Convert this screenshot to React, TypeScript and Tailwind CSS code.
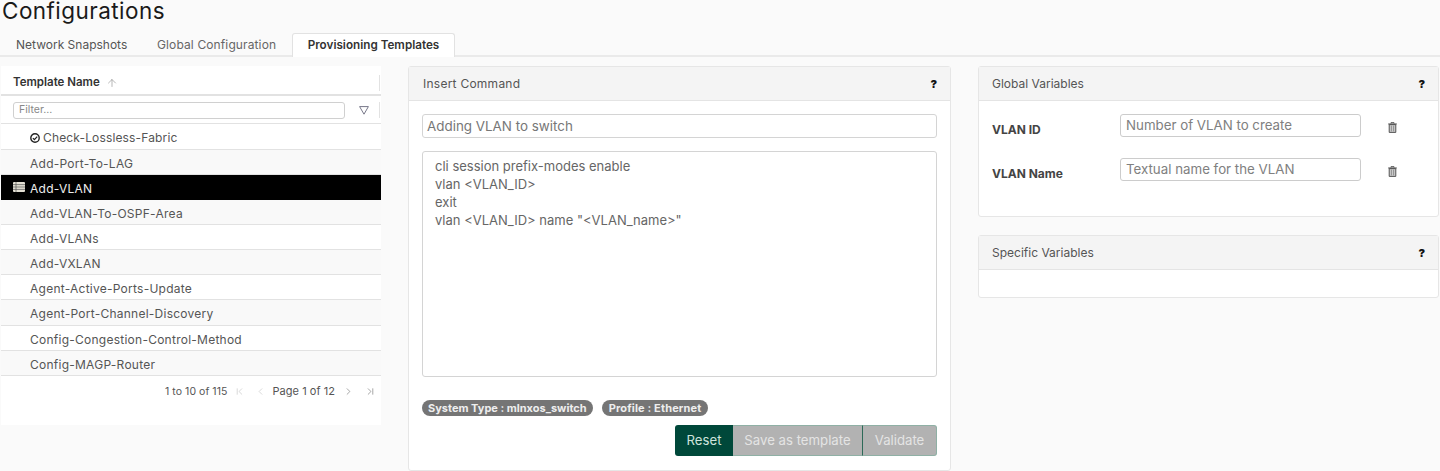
import React from "react";
import { ArrowUp, ChevronFirst, ChevronLast, ChevronLeft, ChevronRight } from "lucide-react";

const rows = [
  "Add-Port-To-LAG",
  "Add-VLAN",
  "Add-VLAN-To-OSPF-Area",
  "Add-VLANs",
  "Add-VXLAN",
  "Agent-Active-Ports-Update",
  "Agent-Port-Channel-Discovery",
  "Config-Congestion-Control-Method",
  "Config-MAGP-Router",
];

const TableIcon = () => (
  <svg width="12" height="10" viewBox="0 0 12 10" className="absolute left-[12px] top-[7px]">
    <rect width="12" height="10" rx="1" fill="#e4e0d4" />
    <path d="M0 2.6H12M0 5H12M0 7.4H12" stroke="#555" strokeWidth="0.7" />
    <path d="M3 0V10" stroke="#555" strokeWidth="0.7" />
  </svg>
);

const CheckIcon = () => (
  <svg width="10" height="10" viewBox="0 0 10 10" className="mr-[3px] shrink-0">
    <circle cx="5" cy="5" r="4.2" fill="none" stroke="#222" strokeWidth="1.4" />
    <path d="M2.9 5.1 4.4 6.6 7.2 3.6" fill="none" stroke="#222" strokeWidth="1.3" />
  </svg>
);

const FilterIcon = () => (
  <svg width="10" height="9" viewBox="0 0 10 9" className="ml-[14px]">
    <path d="M.6.6H9.4L5 8.2Z" fill="none" stroke="#778" strokeWidth="1" strokeLinejoin="round" />
  </svg>
);

const TrashIcon = () => (
  <svg width="9" height="11" viewBox="0 0 9 11" className="ml-[27px] mt-[8px]">
    <path d="M3 1.6V.6H6V1.6" fill="none" stroke="#555" strokeWidth="0.9" />
    <path d="M.2 2H8.8" stroke="#555" strokeWidth="1.1" />
    <path d="M1.2 2.6H7.8V10.4H1.2Z" fill="#ccc" stroke="#444" strokeWidth="0.9" />
    <path d="M3.4 3.6V9.4M5.6 3.6V9.4" stroke="#777" strokeWidth="0.7" />
  </svg>
);

const PanelHeader = ({ title, wide }: { title: string; wide?: boolean }) => (
  <div className="h-[34px] flex items-center justify-between pl-[13px] pr-[13px] bg-[#f4f4f4] border-b border-[#e4e4e4] text-[12px] text-[#555]">
    <span className={wide ? "pl-px tracking-[0.25px]" : ""}>{title}</span>
    <span className="pt-[2px] text-[11px] font-black text-[#111]">?</span>
  </div>
);

const Variable = ({ label, hint }: { label: string; hint: string }) => (
  <div className="flex items-start h-[44px]">
    <span className="w-[141px] pt-[7px] pl-[13px] text-[12px] font-bold text-[#444]">{label}</span>
    <div className="w-[241px] h-[23px] pt-px border border-[#ccc] rounded-[3px] flex items-center px-[5px] text-[13.3px] text-[#808080]">{hint}</div>
    <TrashIcon />
  </div>
);

export default function App() {
  return (
    <div className="w-[1440px] h-[471px] overflow-hidden bg-[#fafafa] font-['Inter',sans-serif] text-[#555]">
      <h1 className="h-[33px] pl-[2px] text-[22.5px] tracking-[0.45px] leading-[22px] text-[#1a1a1a]">Configurations</h1>

      {/* Tabs */}
      <div className="h-[24px] flex items-end border-b-2 border-[#eaeaea] text-[12px]">
        <div className="w-[157px] h-full pl-[16px] pt-[2px] flex items-center text-[#555]">Network Snapshots</div>
        <div className="w-[135px] h-full pt-[2px] flex items-center tracking-[0.12px] text-[#666]">Global Configuration</div>
        <div className="w-[163px] h-[24px] flex items-center justify-center bg-white border border-b-0 border-[#e2e2e2] rounded-t-[3px] -mb-[2px] text-[11.7px] font-semibold text-[#333]">
          Provisioning Templates
        </div>
      </div>

      <div className="flex mt-[9px]">
        {/* Template list */}
        <div className="w-[380px] ml-px h-[359px] bg-white shrink-0">
          <div className="h-[30px] flex items-center pl-[12px] pt-[6px] pr-[1px] border-b-2 border-[#e2e2e2] text-[11.5px] font-semibold text-[#333]">
            Template Name
            <ArrowUp size={12} strokeWidth={1.4} className="ml-[6px] text-[#999]" />
            <span className="ml-auto w-px h-[16px] bg-[#e2e2e2]" />
          </div>
          <div className="h-[28px] flex items-center pl-[12px] pr-[1px] pt-[1px] border-b border-[#e2e2e2]">
            <div className="w-[332px] h-[17px] border border-[#d0d0d0] rounded-[3px] pl-[5px] flex items-center text-[10.5px] text-[#888]">Filter...</div>
            <FilterIcon />
            <span className="ml-auto w-px h-[16px] bg-[#e2e2e2]" />
          </div>
          <div className="h-[26px] flex items-center pl-[29px] pt-[2px] border-b border-[#e2e2e2] text-[12px] tracking-[0.15px]">
            <CheckIcon />
            Check-Lossless-Fabric
          </div>
          {rows.map((name, i) => (
            <div
              key={name}
              className={
                "relative flex items-center pl-[29px] pt-[3px] text-[12px] tracking-[0.25px] border-b " +
                (name === "Agent-Port-Channel-Discovery" ? "h-[26px] " : "h-[25px] ") +
                (name === "Add-VLAN"
                  ? "bg-black text-[#eee] border-black"
                  : i % 2 === 0
                    ? "bg-[#f9f9f9] border-[#e2e2e2]"
                    : "bg-white border-[#e2e2e2]")
              }
            >
              {name === "Add-VLAN" && <TableIcon />}
              {name}
            </div>
          ))}
          <div className="h-[29px] flex items-center justify-end pr-[5px] pt-[2px] text-[10.5px] tracking-[0.05px] text-[#555]">
            <span>1 to 10 of 115</span>
            <ChevronFirst size={11} strokeWidth={1.4} className="ml-[7px] text-[#c4c4c4]" />
            <ChevronLeft size={11} strokeWidth={1.4} className="ml-[10px] text-[#c4c4c4]" />
            <span className="ml-[6px] text-[11px]">Page 1 of 12</span>
            <ChevronRight size={11} strokeWidth={1.4} className="ml-[8px] text-[#777]" />
            <ChevronLast size={11} strokeWidth={1.4} className="ml-[11px] text-[#777]" />
          </div>
        </div>

        {/* Insert command */}
        <div className="w-[543px] h-[405px] ml-[27px] shrink-0 bg-white border border-[#e6e6e6] rounded-[3px]">
          <PanelHeader title="Insert Command" wide />
          <div className="px-[13px] pt-[13px]">
            <div className="h-[24px] border border-[#d4d4d4] rounded-[3px] flex items-center px-[4px] text-[13.4px] text-[#777]">Adding VLAN to switch</div>
            <div className="h-[226px] mt-[13px] border border-[#d4d4d4] rounded-[3px] pl-[12px] pt-[5px] text-[13px] leading-[18px] text-[#666] whitespace-pre">
              {'cli session prefix-modes enable\nvlan <VLAN_ID>\nexit\nvlan <VLAN_ID> name "<VLAN_name>"'}
            </div>
            <div className="flex gap-[9px] mt-[23px] text-[11px] font-bold text-[#eee]">
              <span className="h-[16px] px-[6px] rounded-full bg-[#757575] flex items-center">System Type : mlnxos_switch</span>
              <span className="h-[16px] px-[7px] tracking-[0.15px] rounded-full bg-[#757575] flex items-center">Profile : Ethernet</span>
            </div>
            <div className="flex justify-end mt-[9px] text-[13.2px]">
              <div className="h-[31px] w-[58px] flex items-center justify-center bg-[#00483a] text-[#cfe3dc] rounded-l-[3px]">Reset</div>
              <div className="h-[31px] w-[130px] flex items-center justify-center bg-[#b2b2b2] text-[#e4e4e4] border-y border-y-[#8fb0a5] border-r border-r-[#2d6a58]">Save as template</div>
              <div className="h-[31px] w-[74px] flex items-center justify-center bg-[#b2b2b2] text-[#e4e4e4] border border-l-0 border-[#8fb0a5] rounded-r-[3px]">Validate</div>
            </div>
          </div>
        </div>

        {/* Variables */}
        <div className="w-[461px] ml-[27px] shrink-0 flex flex-col gap-[18px]">
          <div className="h-[151px] bg-white border border-[#e6e6e6] rounded-[3px]">
            <PanelHeader title="Global Variables" />
            <div className="pt-[13px]">
              <Variable label="VLAN ID" hint="Number of VLAN to create" />
              <Variable label="VLAN Name" hint="Textual name for the VLAN" />
            </div>
          </div>
          <div className="h-[63px] bg-white border border-[#e6e6e6] rounded-[3px]">
            <PanelHeader title="Specific Variables" />
          </div>
        </div>
      </div>
    </div>
  );
}
